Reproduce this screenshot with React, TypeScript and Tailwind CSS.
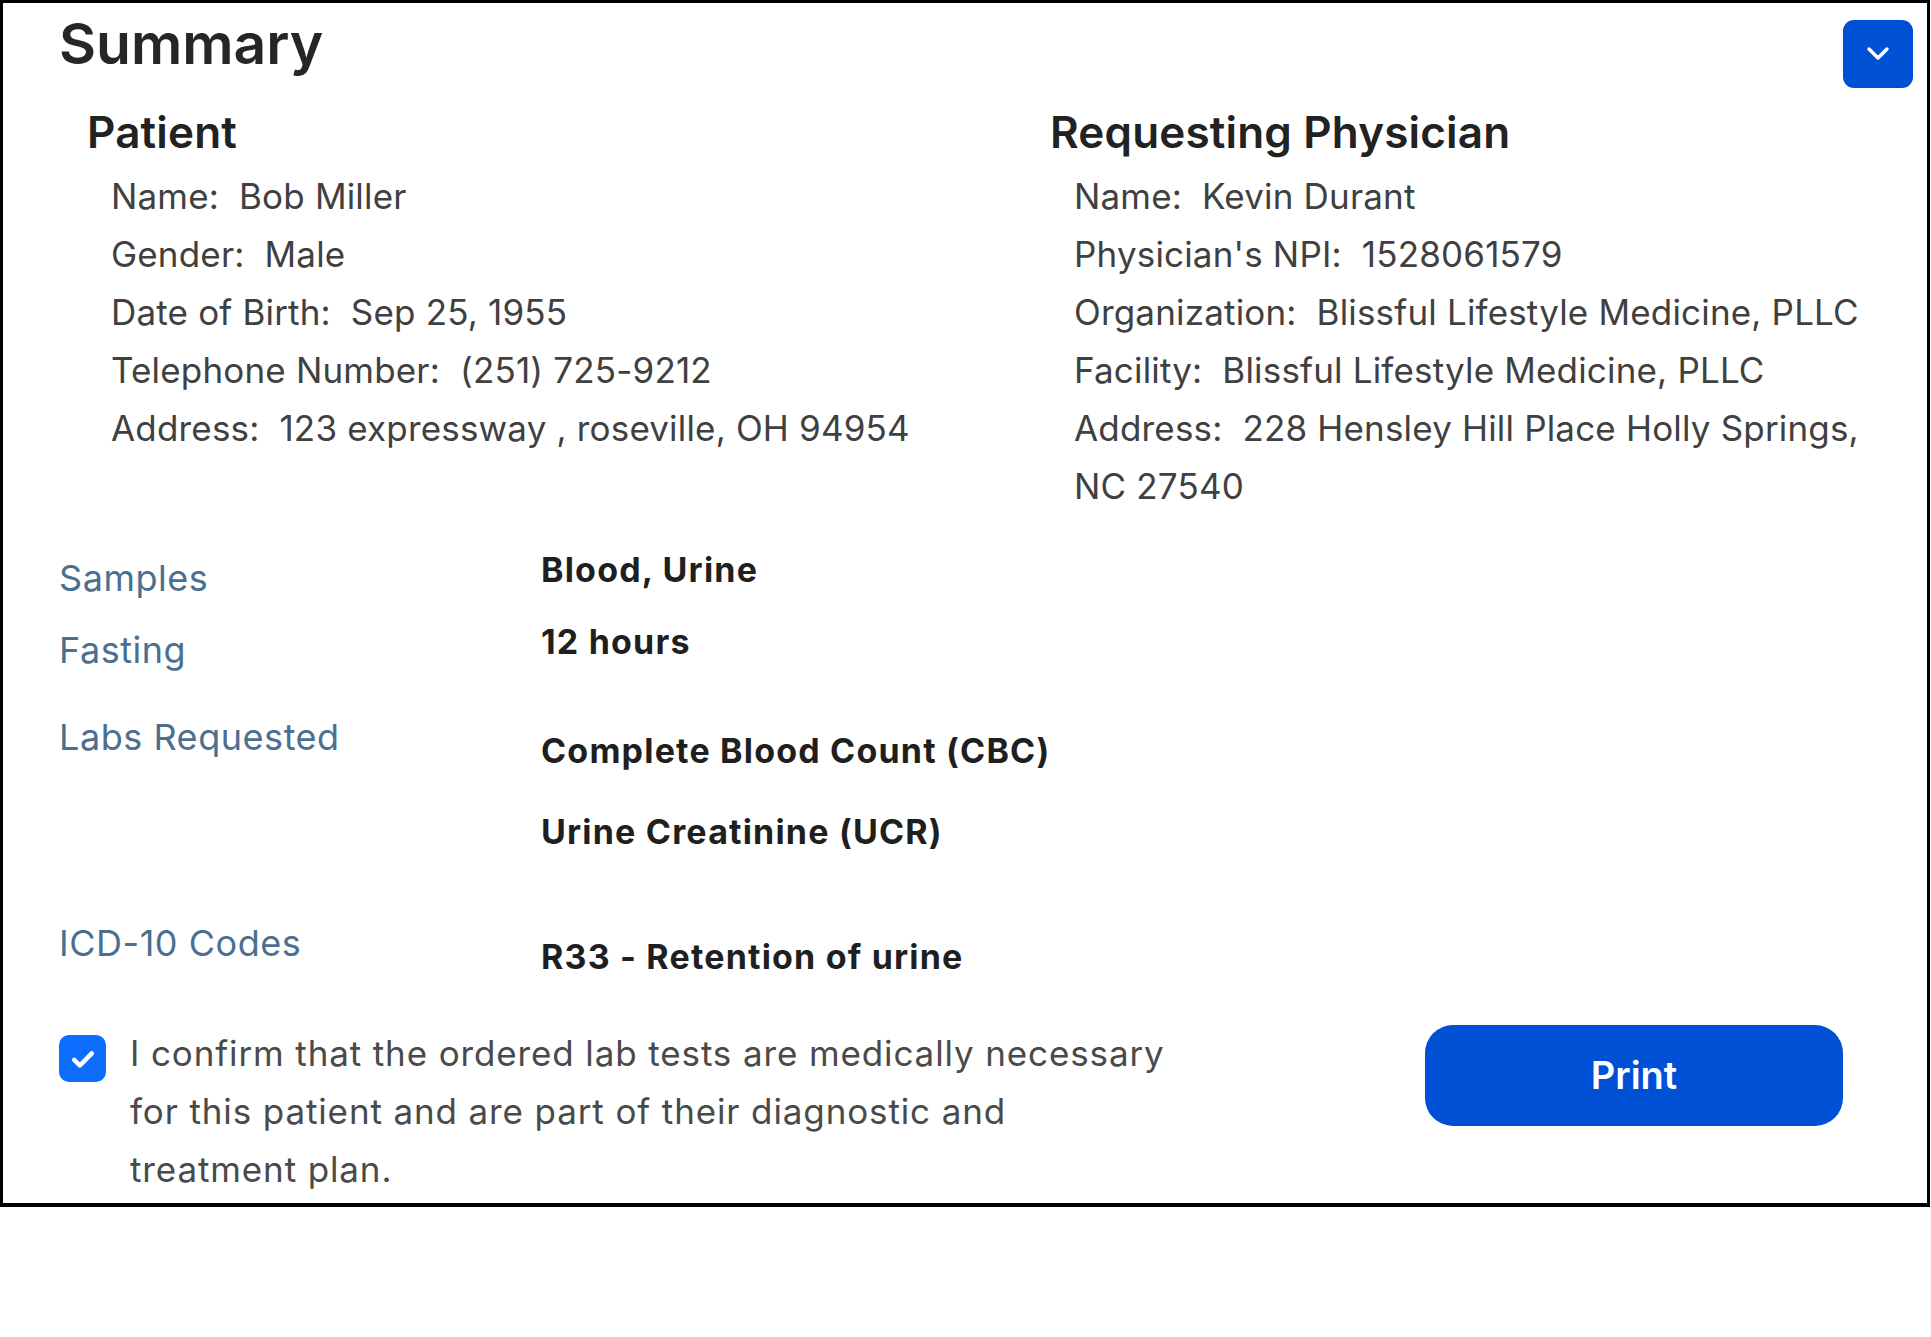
import React from "react";

const patient = [
  ["Name:", "Bob Miller"],
  ["Gender:", "Male"],
  ["Date of Birth:", "Sep 25, 1955"],
  ["Telephone Number:", "(251) 725-9212"],
  ["Address:", "123 expressway , roseville, OH 94954"],
];

const physician = [
  ["Name:", "Kevin Durant"],
  ["Physician's NPI:", "1528061579"],
  ["Organization:", "Blissful Lifestyle Medicine, PLLC"],
  ["Facility:", "Blissful Lifestyle Medicine, PLLC"],
  ["Address:", "228 Hensley Hill Place Holly Springs, NC 27540"],
];

const InfoRow = ({ label, value }: { label: string; value: string }) => (
  <p className="leading-[58px]">
    {label}
    <span className="ml-[20px]">{value}</span>
  </p>
);

const App = () => {
  return (
    <div className="bg-white w-[1931px] h-[1337px] font-[Inter,'Liberation_Sans',sans-serif]">
      <div className="w-[1930px] h-[1207px] border-[3px] border-b-[4px] border-black">
        {/* header */}
        <div className="flex justify-between items-start pl-[56px] pr-[14px] pt-[12px]">
          <h1 className="text-[57px] leading-[58px] font-semibold text-[#262626]">Summary</h1>
          <button className="mt-[5px] w-[70px] h-[68px] rounded-[11px] bg-[#0050d5] flex items-center justify-center">
            <svg width="26" height="16" viewBox="0 0 26 16" fill="none">
              <polyline points="4,3 13,12 22,3" stroke="white" strokeWidth="3.5" strokeLinecap="round" strokeLinejoin="round" />
            </svg>
          </button>
        </div>

        {/* patient / physician */}
        <div className="flex mt-[20px] pl-[56px] text-[35px] tracking-[0.005em] text-[#404040]">
          <div className="w-[991px] pl-[28px]">
            <h2 className="text-[44px] leading-[48px] font-semibold text-[#222]">Patient</h2>
            <div className="mt-[11px] pl-[24px]">
              {patient.map(([k, v]) => (
                <InfoRow key={k} label={k} value={v} />
              ))}
            </div>
          </div>
          <div className="flex-1">
            <h2 className="text-[44px] leading-[48px] font-semibold text-[#222]">Requesting Physician</h2>
            <div className="mt-[11px] pl-[24px] w-[854px]">
              {physician.map(([k, v]) => (
                <InfoRow key={k + v} label={k} value={v} />
              ))}
            </div>
          </div>
        </div>

        {/* order details */}
        <div className="mt-[40px] pl-[56px] text-[#1f1f1f] text-[34px] font-bold tracking-[0.035em]">
          <div className="flex items-start">
            <div className="w-[482px] leading-[46px] text-[36px] font-normal tracking-[0.015em] text-[#4b6f91]">Samples</div>
            <div className="-mt-2 leading-[46px]">Blood, Urine</div>
          </div>
          <div className="flex items-start mt-[26px]">
            <div className="w-[482px] leading-[46px] text-[36px] font-normal tracking-[0.015em] text-[#4b6f91]">Fasting</div>
            <div className="-mt-2 leading-[46px]">12 hours</div>
          </div>
          <div className="flex items-start mt-[41px]">
            <div className="w-[482px] leading-[46px] text-[36px] font-normal tracking-[0.015em] text-[#4b6f91]">Labs Requested</div>
            <div className="mt-[14px] flex flex-col gap-[35px]">
              <div className="leading-[46px]">Complete Blood Count (CBC)</div>
              <div className="leading-[46px]">Urine Creatinine (UCR)</div>
            </div>
          </div>
          <div className="flex items-start mt-[65px]">
            <div className="w-[482px] leading-[46px] text-[36px] font-normal tracking-[0.015em] text-[#4b6f91]">ICD-10 Codes</div>
            <div className="mt-[14px] leading-[46px]">R33 - Retention of urine</div>
          </div>
        </div>

        {/* confirmation + print */}
        <div className="mt-[44px] flex items-start justify-between pl-[56px] pr-[84px]">
          <label className="flex items-start">
            <span className="mt-[11px] w-[47px] h-[47px] shrink-0 rounded-[10px] bg-[#0d6efd] flex items-center justify-center">
              <svg width="34" height="34" viewBox="0 0 24 24" fill="none">
                <path d="M5.8 12.6l4 4L18.2 8" stroke="white" strokeWidth="3.2" strokeLinecap="round" strokeLinejoin="round" />
              </svg>
            </span>
            <span className="ml-[24px] w-[1043px] leading-[58px] text-[35px] tracking-[0.025em] text-[#4a4a4a]">
              I confirm that the ordered lab tests are medically necessary for this patient and are part of their diagnostic and treatment plan.
            </span>
          </label>
          <button className="mt-[1px] w-[418px] h-[101px] rounded-[28px] bg-[#0050d5] text-white text-[38px] font-semibold">
            Print
          </button>
        </div>
      </div>
    </div>
  );
};

export default App;
